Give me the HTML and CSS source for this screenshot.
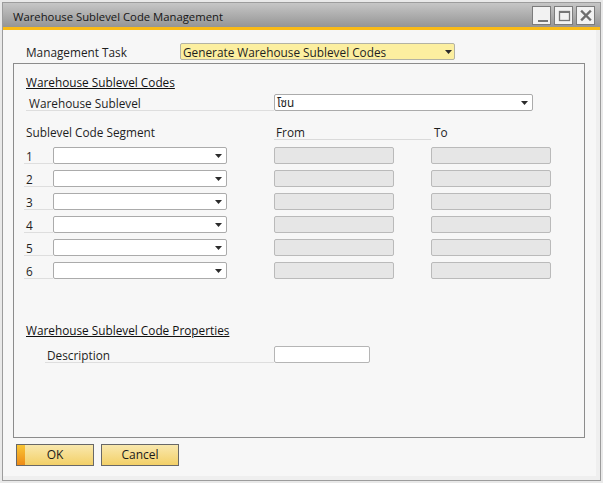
FILE: index.html
```html
<!DOCTYPE html>
<html>
<head>
<meta charset="utf-8">
<link rel="stylesheet" href="styles.css">
</head>
<body>
<div class="window">
  <div class="titlebar">
    <span class="title">Warehouse Sublevel Code Management</span>
    <div class="winbtns">
      <span class="wbtn"><svg width="17" height="17" viewBox="0 0 17 17"><rect x="5" y="13" width="10" height="2" fill="#767676"/></svg></span>
      <span class="wbtn"><svg width="17" height="17" viewBox="0 0 17 17"><rect x="4.5" y="4.5" width="10" height="9" fill="none" stroke="#767676" stroke-width="1.3"/><rect x="4" y="4" width="11" height="2" fill="#767676"/></svg></span>
      <span class="wbtn"><svg width="17" height="17" viewBox="0 0 17 17"><path d="M5 4.5 L13 12.5 M13 4.5 L5 12.5" stroke="#6e6e6e" stroke-width="2.4" stroke-linecap="square"/></svg></span>
    </div>
  </div>
  <div class="accent"></div>
  <div class="body">
    <div class="task-row">
      <span class="task-label">Management Task</span>
      <div class="select yellow">
        <span class="sel-text">Generate Warehouse Sublevel Codes</span>
        <svg class="arrow" width="7" height="4" viewBox="0 0 7 4"><polygon points="0,0 7,0 3.5,4" fill="#2b2b2b"/></svg>
      </div>
    </div>
    <div class="group">
      <div class="heading">Warehouse Sublevel Codes</div>
      <div class="sub-row">
        <span class="field-label">Warehouse Sublevel</span>
        <div class="select thai">
          <span class="sel-text">โซน</span>
          <svg class="arrow" width="7" height="4" viewBox="0 0 7 4"><polygon points="0,0 7,0 3.5,4" fill="#2b2b2b"/></svg>
        </div>
      </div>
      <div class="seg-head">
        <span class="seg-title">Sublevel Code Segment</span>
        <span class="from-head">From</span>
        <span class="to-head">To</span>
      </div>
      <div class="seg-list">
        <div class="seg-row"><span class="num">1</span><div class="select seg"><svg class="arrow" width="7" height="4" viewBox="0 0 7 4"><polygon points="0,0 7,0 3.5,4" fill="#2b2b2b"/></svg></div><div class="box from"></div><div class="box to"></div></div>
        <div class="seg-row"><span class="num">2</span><div class="select seg"><svg class="arrow" width="7" height="4" viewBox="0 0 7 4"><polygon points="0,0 7,0 3.5,4" fill="#2b2b2b"/></svg></div><div class="box from"></div><div class="box to"></div></div>
        <div class="seg-row"><span class="num">3</span><div class="select seg"><svg class="arrow" width="7" height="4" viewBox="0 0 7 4"><polygon points="0,0 7,0 3.5,4" fill="#2b2b2b"/></svg></div><div class="box from"></div><div class="box to"></div></div>
        <div class="seg-row"><span class="num">4</span><div class="select seg"><svg class="arrow" width="7" height="4" viewBox="0 0 7 4"><polygon points="0,0 7,0 3.5,4" fill="#2b2b2b"/></svg></div><div class="box from"></div><div class="box to"></div></div>
        <div class="seg-row"><span class="num">5</span><div class="select seg"><svg class="arrow" width="7" height="4" viewBox="0 0 7 4"><polygon points="0,0 7,0 3.5,4" fill="#2b2b2b"/></svg></div><div class="box from"></div><div class="box to"></div></div>
        <div class="seg-row"><span class="num">6</span><div class="select seg"><svg class="arrow" width="7" height="4" viewBox="0 0 7 4"><polygon points="0,0 7,0 3.5,4" fill="#2b2b2b"/></svg></div><div class="box from"></div><div class="box to"></div></div>
      </div>
      <div class="heading props">Warehouse Sublevel Code Properties</div>
      <div class="desc-row">
        <span class="desc-label">Description</span>
        <div class="input"></div>
      </div>
    </div>
    <div class="buttons">
      <button class="btn ok">OK</button>
      <button class="btn">Cancel</button>
    </div>
  </div>
</div>
</body>
</html>
```

FILE: styles.css
```css
* { box-sizing: border-box; }
html, body { margin: 0; padding: 0; }
body {
  background: #e9e9e9;
  font-family: "Open Sans", "Noto Sans", "DejaVu Sans", sans-serif;
  font-size: 11.8px;
  color: #1e1e1e;
}
.window {
  margin: 2px;
  border: 1px solid #9c9c9c;
  height: 479px;
  display: flex;
  flex-direction: column;
  background: #f7f7f7;
}
.titlebar {
  height: 24px;
  flex: none;
  display: flex;
  align-items: flex-start;
  padding: 0 5px 0 10px;
  background: linear-gradient(#c6c6c6, #959595);
}
.title {
  font-size: 11.3px;
  line-height: 16px;
  padding-top: 6px;
  color: #161616;
}
.winbtns {
  margin-left: auto;
  margin-top: 3px;
  display: flex;
  gap: 3px;
}
.wbtn {
  width: 19px;
  height: 19px;
  border: 1px solid #7c7c7c;
  background: #f2f2f2;
  display: flex;
}
.accent {
  height: 3px;
  flex: none;
  background: #f9bb17;
}
.body {
  flex: 1;
  padding-top: 13px;
  border-right: 4px solid #efefef;
  border-bottom: 4px solid #efefef;
  display: flex;
  flex-direction: column;
}
.task-row {
  display: flex;
  height: 17px;
  align-items: center;
  padding-left: 23px;
}
.task-label {
  width: 154px;
  line-height: 16px;
  padding-top: 1px;
}
.select {
  height: 17px;
  border: 1px solid #ababab;
  border-radius: 2px;
  background: #fff;
  display: flex;
  align-items: center;
}
.sel-text {
  line-height: 15px;
  padding-left: 2px;
  padding-top: 1px;
  white-space: nowrap;
}
.arrow {
  margin-left: auto;
  margin-right: 4px;
  flex: none;
}
.select.yellow {
  width: 275px;
  background: #fcefa0;
  border-color: #b3b3a4;
}
.select.yellow .arrow { margin-right: 2px; }
.group {
  margin: 3px 11px 0 10px;
  height: 375px;
  border: 1px solid #8c8c8c;
  padding-top: 10px;
}
.heading {
  margin-left: 12px;
  line-height: 16px;
  height: 16px;
  text-decoration: underline;
  color: #111;
}
.sub-row {
  display: flex;
  margin-top: 4px;
  height: 17px;
}
.field-label {
  margin-left: 12px;
  width: 248px;
  padding-left: 3px;
  padding-top: 1px;
  line-height: 16px;
  border-bottom: 1px solid #dedede;
}
.select.thai { width: 259px; }
.select.thai .sel-text { padding-left: 2px; font-family: "Noto Sans Thai", "Tahoma", "Noto Sans", sans-serif; }
.seg-head {
  display: flex;
  margin-top: 12px;
  height: 17px;
  line-height: 16px;
}
.seg-title {
  margin-left: 12px;
  width: 248px;
  padding-top: 1px;
}
.from-head {
  width: 157px;
  padding-left: 2px;
  padding-top: 1px;
  border-bottom: 1px solid #dadada;
}
.to-head { padding-left: 3px; padding-top: 1px; }
.seg-list {
  margin-top: 7px;
  display: flex;
  flex-direction: column;
  gap: 6px;
}
.seg-row {
  display: flex;
  height: 17px;
}
.num {
  margin-left: 10px;
  width: 29px;
  padding-left: 2px;
  padding-top: 1px;
  line-height: 16px;
  border-bottom: 1px solid #dedede;
}
.select.seg { width: 174px; }
.box {
  width: 120px;
  height: 17px;
  background: #e6e6e6;
  border: 1px solid #bababa;
  border-radius: 2px;
}
.box.from { margin-left: 47px; }
.box.to { margin-left: 37px; }
.heading.props { margin-top: 43px; }
.desc-row {
  display: flex;
  margin-top: 8px;
  height: 17px;
}
.desc-label {
  margin-left: 31px;
  width: 229px;
  padding-left: 2px;
  padding-top: 1px;
  line-height: 16px;
  border-bottom: 1px solid #dedede;
}
.input {
  width: 96px;
  height: 17px;
  background: #fff;
  border: 1px solid #b5b5b5;
  border-radius: 2px;
}
.buttons {
  display: flex;
  gap: 7px;
  margin: 6px 0 0 13px;
}
.btn {
  width: 78px;
  height: 22px;
  padding: 0;
  border: 1px solid #686868;
  background: linear-gradient(#f9e8ae, #f3d068);
  font-family: inherit;
  font-size: 12px;
  color: #1b1b1b;
  line-height: 18px;
}
.btn.ok {
  background: linear-gradient(#f9c635, #ee8b18) left top / 8px 100% no-repeat, linear-gradient(#f9e8ae, #f3d068);
}
```
